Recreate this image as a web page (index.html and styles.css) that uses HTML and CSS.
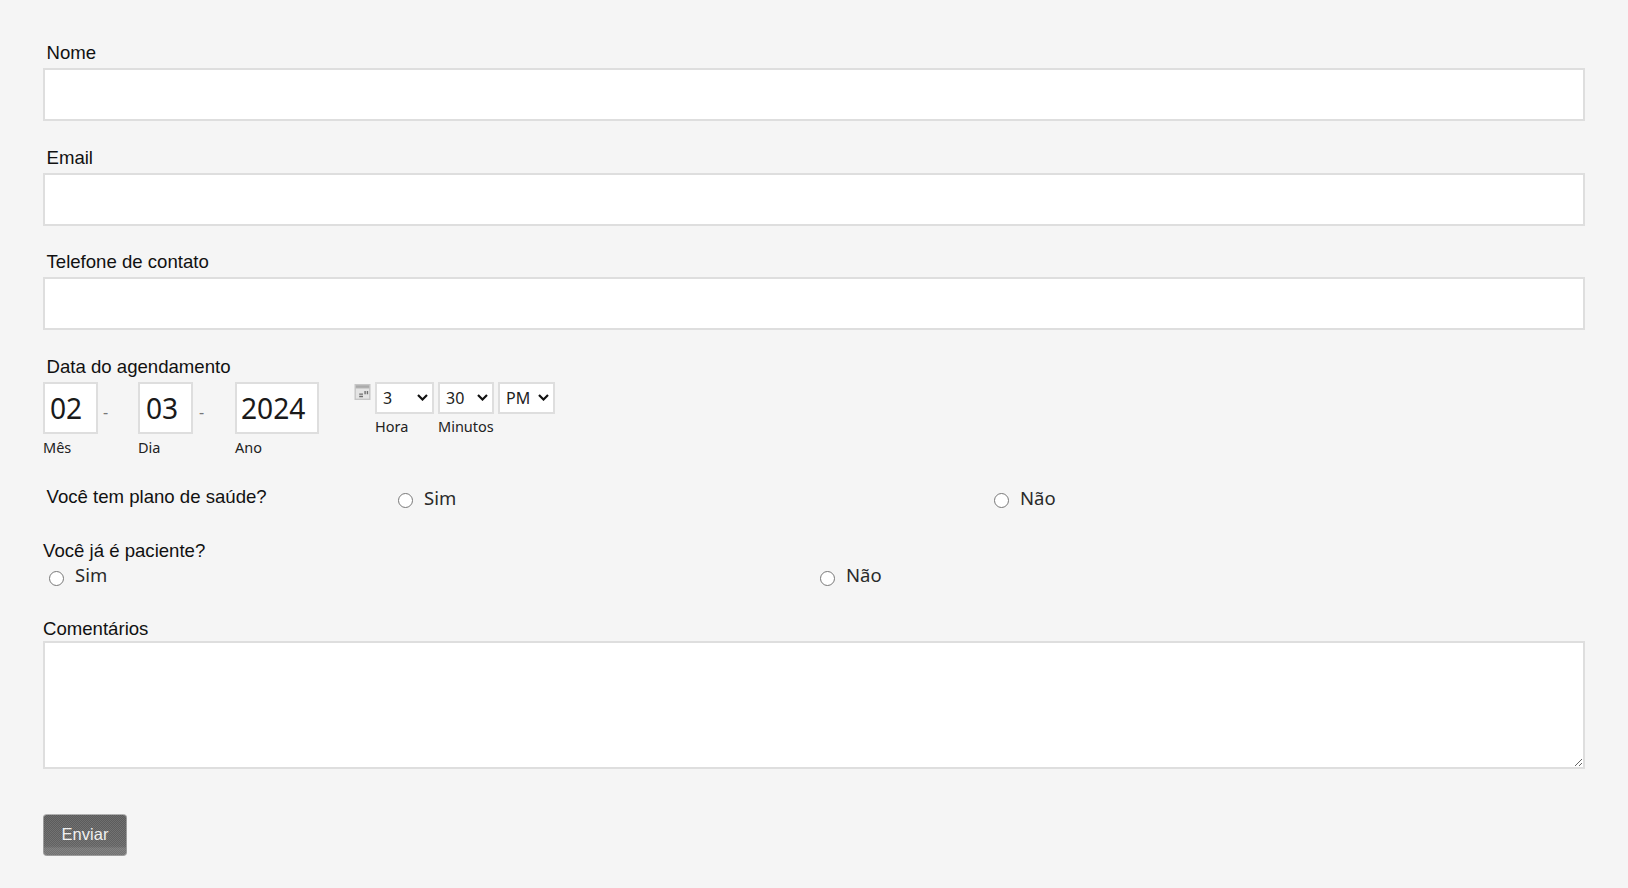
FILE: index.html
```html
<!DOCTYPE html>
<html lang="pt">
<head>
<meta charset="utf-8">
<title>Agendamento</title>
<link rel="stylesheet" href="styles.css">
</head>
<body>
<form class="form">
  <div class="field">
    <label class="label label-indent">Nome</label>
    <input class="text-input" type="text">
  </div>
  <div class="field">
    <label class="label label-indent">Email</label>
    <input class="text-input" type="text">
  </div>
  <div class="field">
    <label class="label label-indent">Telefone de contato</label>
    <input class="text-input" type="text">
  </div>
  <div class="date-field">
    <label class="label label-indent">Data do agendamento</label>
    <div class="date-row">
      <div class="date-part part-month">
        <input class="date-input" type="text" value="02">
        <span class="sub">Mês</span>
      </div>
      <span class="dash">-</span>
      <div class="date-part part-day">
        <input class="date-input" type="text" value="03">
        <span class="sub">Dia</span>
      </div>
      <span class="dash">-</span>
      <div class="date-part part-year">
        <input class="date-input" type="text" value="2024">
        <span class="sub">Ano</span>
      </div>
      <svg class="cal-icon" viewBox="0 0 17 17" width="17" height="16" aria-hidden="true">
        <rect x="0" y="0" width="17" height="17" fill="#c6c6c6"/>
        <rect x="1.5" y="1.5" width="14" height="2.5" fill="#aaaaaa"/>
        <rect x="1.5" y="5" width="14" height="10.5" fill="#e4e4e4"/>
        <path d="M5 10h4v1.500H5zM5 12.500h4V14H5zM10.500 7.500h1.500v3.500h-1.500zM13 7.500h1.500v3.500H13z" fill="#6e6e6e"/>
      </svg>
      <div class="time-part">
        <select class="time-select sel-hour"><option>3</option></select>
        <span class="sub">Hora</span>
      </div>
      <div class="time-part">
        <select class="time-select sel-min"><option>30</option></select>
        <span class="sub">Minutos</span>
      </div>
      <div class="time-part">
        <select class="time-select sel-ampm"><option>PM</option></select>
      </div>
    </div>
  </div>
  <div class="radio-row-a">
    <span class="label label-indent">Você tem plano de saúde?</span>
    <label class="radio"><input type="radio" name="plano"><span>Sim</span></label>
    <label class="radio"><input type="radio" name="plano"><span>Não</span></label>
  </div>
  <div class="radio-block">
    <span class="label">Você já é paciente?</span>
    <div class="radio-row-b">
      <label class="radio"><input type="radio" name="paciente"><span>Sim</span></label>
      <label class="radio"><input type="radio" name="paciente"><span>Não</span></label>
    </div>
  </div>
  <div class="comment-field">
    <label class="label">Comentários</label>
    <textarea class="textarea"></textarea>
  </div>
  <button class="submit" type="button">Enviar</button>
</form>
</body>
</html>
```
FILE: styles.css
```css
* { box-sizing: border-box; }
html, body { margin: 0; padding: 0; }
body {
  background: #f5f5f5;
  color: #000;
  font-family: "Liberation Sans", Arial, sans-serif;
  height: 888px;
  overflow: hidden;
}
.form { padding: 42px 43px 0 43px; width: 1628px; }
.label { display: block; font-size: 18.6px; line-height: 21px; color: #111; }
.label-indent { padding-left: 3.5px; }
.field { height: 104.5px; }
.field .label { margin-bottom: 5px; }
.text-input {
  display: block;
  width: 1542px;
  height: 53px;
  background: #fff;
  border: 2px solid #dedede;
  border-radius: 0;
  outline: none;
}
.date-field { height: 131px; }
.date-row { display: flex; align-items: flex-start; margin-top: 5px; font-family: "Noto Sans", sans-serif; }
.date-part { display: flex; flex-direction: column; }
.part-month { width: 55px; }
.part-day { width: 55px; margin-left: -1px; margin-right: 1px; }
.part-year { width: 84px; }
.date-input {
  width: 100%;
  height: 52px;
  padding: 0 5px;
  border: 2px solid #dedede;
  background: #fff;
  font-family: "Noto Sans", sans-serif;
  font-size: 28.2px;
  color: #1a1a1a;
  outline: none;
}
.part-day .date-input { padding-left: 6px; }
.part-year .date-input { padding-left: 4px; }
.sub { font-size: 14.5px; line-height: 20px; color: #222; margin-top: 3px; }
.dash { width: 41px; padding: 20px 0 0 5px; font-size: 16px; line-height: 20px; color: #777; }
.cal-icon { margin: 2px 4px 0 35px; flex: none; }
.time-part { display: flex; flex-direction: column; margin-right: 4px; }
.time-select {
  appearance: none;
  height: 32px;
  border: 2px solid #dedede;
  background: #fff url("data:image/svg+xml,%3Csvg xmlns='http://www.w3.org/2000/svg' width='11' height='7' viewBox='0 0 11 7'%3E%3Cpath d='M1 1l4.500 4.500L10 1' fill='none' stroke='%23111' stroke-width='2.200'/%3E%3C/svg%3E") no-repeat right 4px center;
  font-family: "Noto Sans", sans-serif;
  font-size: 16px;
  color: #222;
  padding: 0 16px 0 6px;
  outline: none;
  border-radius: 0;
}
.time-part .sub { margin-top: 2px; }
.sel-hour { width: 59px; }
.sel-min { width: 56px; }
.sel-ampm { width: 57px; }
.radio-row-a { display: grid; grid-template-columns: 355px 596px 1fr; height: 54px; align-items: start; }
.radio-row-a .label { margin-top: -1px; }
.radio { display: flex; align-items: center; font-family: "Noto Sans", sans-serif; font-size: 18.5px; line-height: 24px; color: #2a2a2a; }
.radio span { position: relative; top: -1px; }
.radio input { width: 15px; height: 15px; margin: 3px 11px 0 0; flex: none; }
.radio-block { height: 78px; }
.radio-block .label { margin-top: -1px; }
.radio-row-b { display: grid; grid-template-columns: 771px 1fr; padding-left: 6px; padding-top: 3px; }
.radio-row-b .radio input { margin-top: 5px; }
.comment-field .label { margin-bottom: 2px; }
.textarea {
  display: block;
  width: 1542px;
  height: 128px;
  background: #fff;
  border: 2px solid #dedede;
  outline: none;
  resize: both;
}
.submit {
  display: block;
  width: 84px;
  height: 42px;
  margin-top: 45px;
  border: 1px solid #9c9c9c;
  border-top-color: #b0b0b0;
  border-radius: 4px;
  background:
    repeating-conic-gradient(rgba(255,255,255,.12) 0 25%, transparent 0 50%) 0 0 / 2px 2px,
    linear-gradient(#5a5a5a 0%, #626262 78%, #747474 84%, #707070 100%);
  color: #f0f0f0;
  font-family: "Liberation Sans", Arial, sans-serif;
  font-size: 16.5px;
}
```
